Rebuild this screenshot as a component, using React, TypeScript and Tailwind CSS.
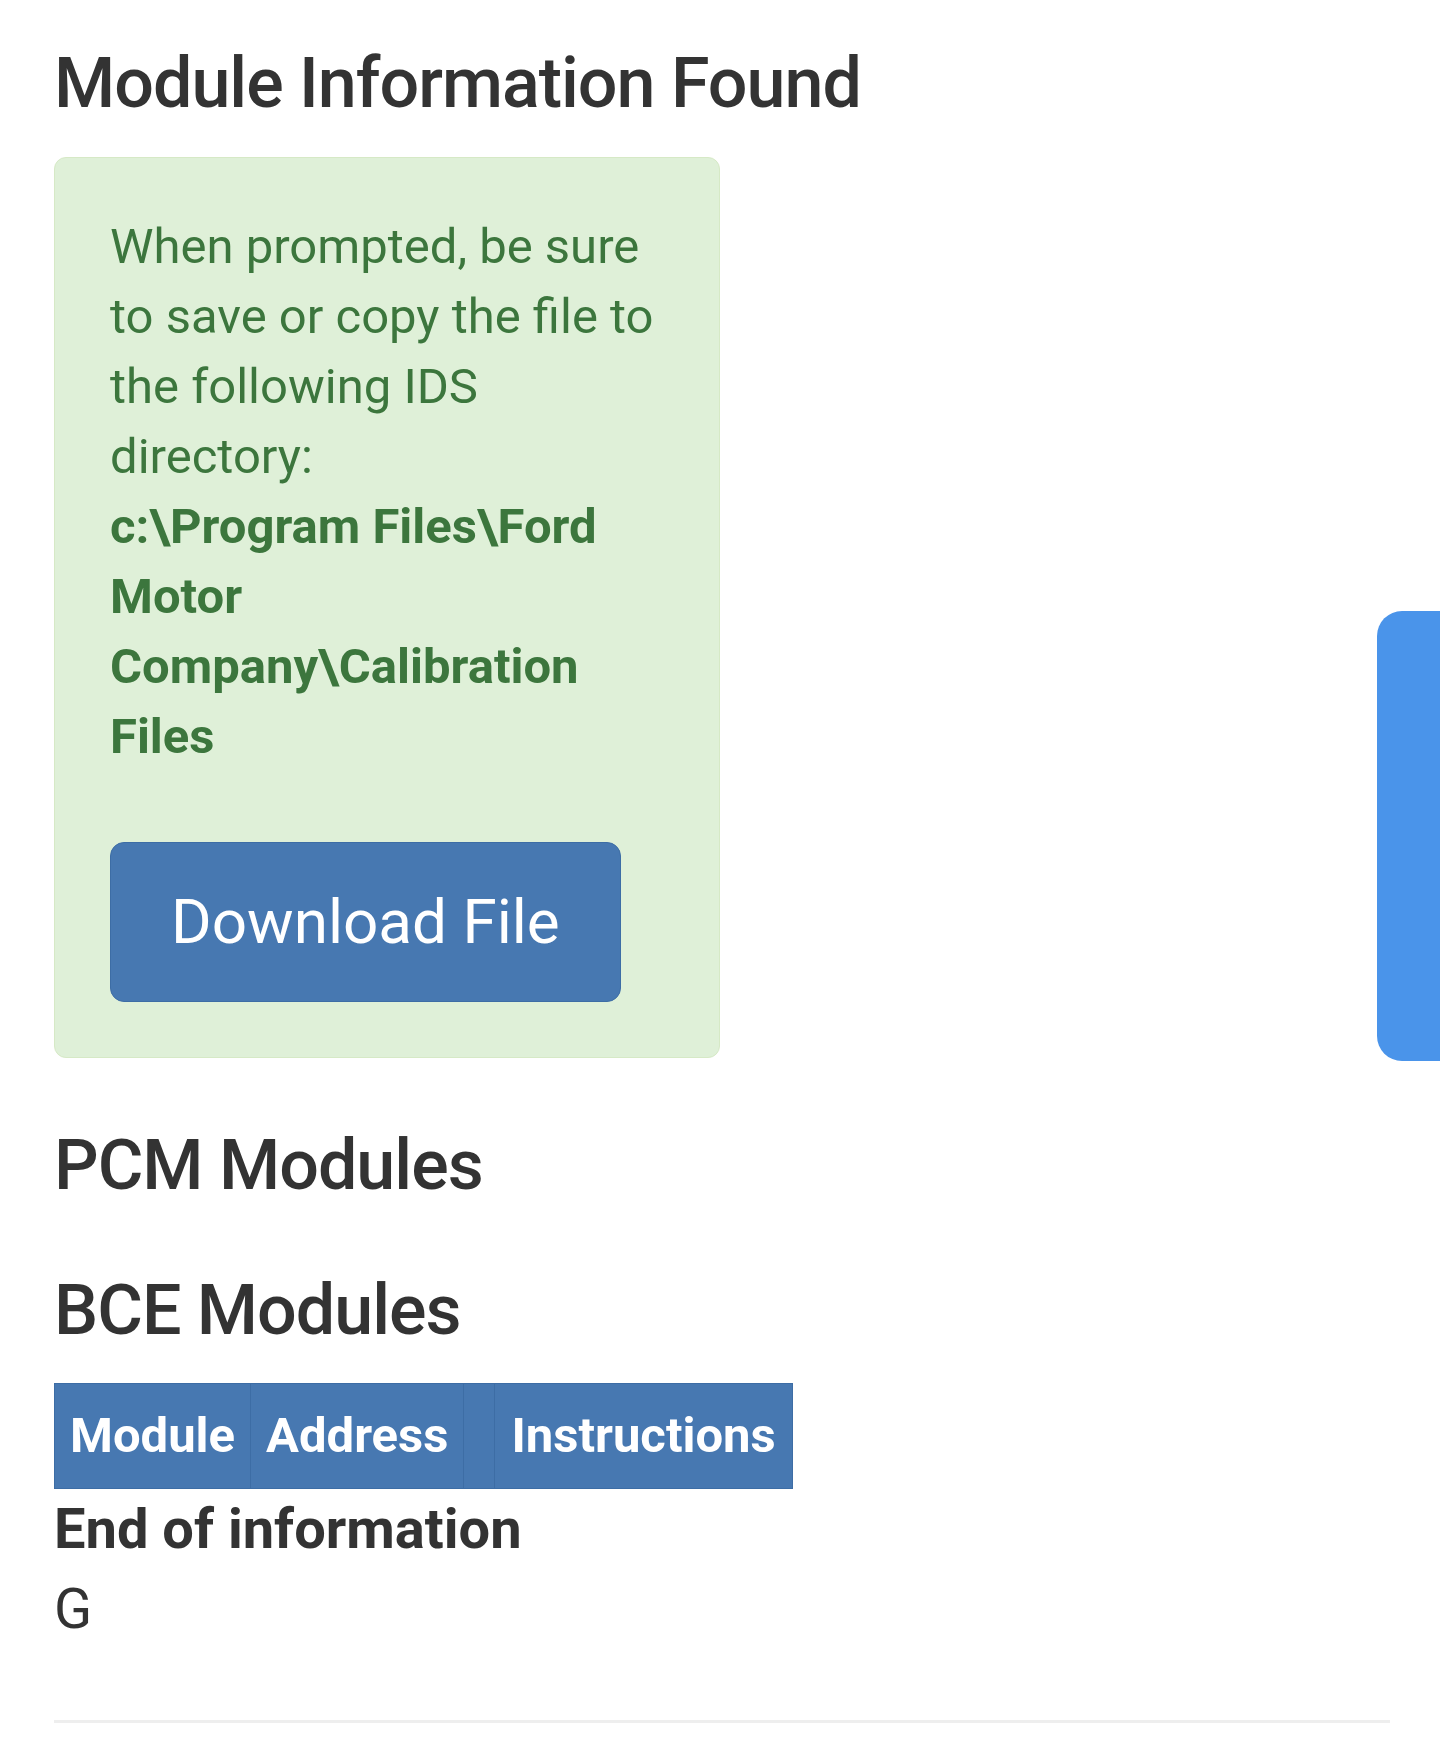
import React from "react";

export default function App() {
  return (
    <div className="relative min-h-[1757px] bg-white pl-[54px] pr-[50px] pt-[45px] font-['Roboto',_'Liberation_Sans',_sans-serif] text-[#333]">
      <h1 className="text-[70px] font-medium leading-[1.1] tracking-[-1px]">Module Information Found</h1>

      <div className="mt-[35px] w-[666px] rounded-[12px] border border-[#d6e9c6] bg-[#dff0d8] px-[55px] pt-[54px] pb-[55px] text-[49px] leading-[70px] text-[#3c763d]">
        <p>
          When prompted, be sure to save or copy the file to the following IDS directory:
          <br />
          <b>c:\Program Files\Ford Motor Company\Calibration Files</b>
        </p>
        <div className="mt-[70px]">
          <button
            type="button"
            className="h-[160px] rounded-[14px] border border-[#3d6da5] bg-[#4778b1] px-[60px] text-[62px] leading-[1.33] text-white"
          >
            Download File
          </button>
        </div>
      </div>

      <h2 className="mt-[69px] text-[70px] font-medium leading-[1.1] tracking-[-1px]">PCM Modules</h2>
      <h2 className="mt-[68px] text-[70px] font-medium leading-[1.1] tracking-[-1px]">BCE Modules</h2>

      <table className="mt-[34px] border-collapse border border-[#3d6da5] bg-[#4778b1] text-white">
        <thead>
          <tr>
            <th className="border border-[#3d6da5] px-[15px] py-[17px] text-left text-[49px] font-bold leading-[70px]">Module</th>
            <th className="border border-[#3d6da5] px-[15px] py-[17px] text-left text-[49px] font-bold leading-[70px]">Address</th>
            <th className="border border-[#3d6da5] px-[15px] py-[17px] text-left text-[49px] font-bold leading-[70px]"></th>
            <th className="border border-[#3d6da5] px-[16px] py-[17px] text-left text-[49px] font-bold leading-[70px]">Instructions</th>
          </tr>
        </thead>
      </table>

      <div className="text-[56px] leading-[80px]">
        <b>End of information</b>
        <div>G</div>
      </div>

      <hr className="mt-[71px] border-0 border-t-[3px] border-[#eeeeee]" />

      {/* floating side tab */}
      <div className="absolute right-0 top-[611px] h-[450px] w-[63px] rounded-l-[25px] bg-[#4a94ea]" />
    </div>
  );
}
